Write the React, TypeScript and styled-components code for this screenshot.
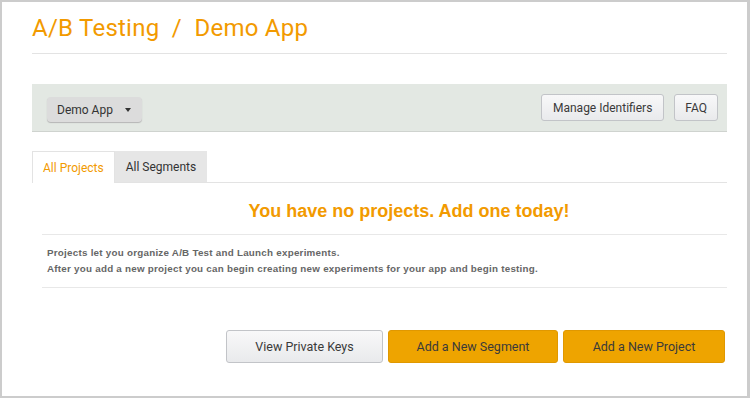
import styled, { createGlobalStyle } from 'styled-components'

const GlobalStyle = createGlobalStyle`
  html, body {
    margin: 0;
    padding: 0;
    background: #ffffff;
  }
  * {
    box-sizing: border-box;
  }
`

const Frame = styled.div`
  width: 750px;
  height: 398px;
  border: 2px solid #cccccc;
  border-right-width: 3px;
  background: #ffffff;
  padding: 10px 20px 0 30px;
  font-family: Roboto, 'Liberation Sans', sans-serif;
  overflow: hidden;
`

const Header = styled.header`
  border-bottom: 1px solid #e3e3e3;
  padding: 1px 0 10px;
`

const Title = styled.h1`
  margin: 0;
  font-size: 24px;
  line-height: 30px;
  font-weight: 400;
  color: #f29a00;
  letter-spacing: 0.25px;
`

const Toolbar = styled.section`
  margin-top: 30px;
  height: 48px;
  background: #e3e8e3;
  border-bottom: 1px solid #cfd3cf;
  display: flex;
  align-items: center;
  padding: 0 9px 0 15px;
  gap: 10px;
`

const DropButton = styled.button`
  height: 25px;
  width: 95px;
  margin-top: 4px;
  border: none;
  border-radius: 4px;
  background: #dcdcdc;
  box-shadow: 0 1px 1px #b5b5b5;
  font-family: Roboto, sans-serif;
  font-size: 12px;
  color: #333;
  display: flex;
  align-items: center;
  justify-content: flex-start;
  gap: 12px;
  padding: 0 0 0 10px;
`

const Caret = styled.span`
  width: 0;
  height: 0;
  border-left: 3.5px solid transparent;
  border-right: 3.5px solid transparent;
  border-top: 4px solid #333;
`

const Spacer = styled.div`
  flex: 1;
`

const ToolButton = styled.button<{ $pad: number }>`
  height: 27px;
  padding: 0 ${(p) => p.$pad}px;
  border: 1px solid #c2c4c8;
  border-radius: 3px;
  background: linear-gradient(#f8f8f9, #e9eaec);
  font-family: Roboto, sans-serif;
  font-size: 12px;
  color: #3a3a3a;
`

const Tabs = styled.nav`
  margin-top: 19px;
  display: flex;
  border-bottom: 1px solid #e3e3e3;
`

const Tab = styled.div<{ $active?: boolean }>`
  display: flex;
  align-items: center;
  padding: 0 10px;
  font-size: 12px;
  color: ${(p) => (p.$active ? '#f29a00' : '#333')};
  background: ${(p) => (p.$active ? '#ffffff' : '#e6e6e6')};
  border: 1px solid ${(p) => (p.$active ? '#e3e3e3' : '#e6e6e6')};
  border-bottom: none;
  margin-bottom: ${(p) => (p.$active ? '-1px' : '0')};
  height: ${(p) => (p.$active ? '32px' : '31px')};
`

const Body = styled.div`
  padding: 0 0 0 10px;
`

const EmptyTitle = styled.h2`
  margin: 0;
  padding: 19px 0 14px 49px;
  text-align: center;
  font-family: 'Liberation Sans', Arial, sans-serif;
  font-weight: 700;
  font-size: 18px;
  line-height: 18px;
  color: #f29a00;
  border-bottom: 1px solid #e8e8e8;
`

const Info = styled.div`
  padding: 10px 5px 10px;
  border-bottom: 1px solid #e8e8e8;
  font-family: 'Liberation Sans', Arial, sans-serif;
  font-weight: 700;
  font-size: 9.8px;
  letter-spacing: 0.25px;
  line-height: 16px;
  color: #666;
`

const InfoLine = styled.p`
  margin: 0;
`

const Actions = styled.div`
  margin-top: 42px;
  display: flex;
  justify-content: flex-end;
  gap: 5px;
  padding-right: 2px;
`

const ActionButton = styled.button<{ $primary?: boolean; $w: number }>`
  width: ${(p) => p.$w}px;
  height: 33px;
  border-radius: 3px;
  font-family: Roboto, sans-serif;
  font-size: 12.5px;
  color: #3a3a3a;
  border: 1px solid ${(p) => (p.$primary ? '#e09800' : '#c2c4c8')};
  background: ${(p) => (p.$primary ? '#eea400' : 'linear-gradient(#f8f8f9, #e9eaec)')};
`

export default function App() {
  return (
    <Frame>
      <GlobalStyle />
      <Header>
        <Title>A/B Testing&nbsp; / &nbsp;Demo App</Title>
      </Header>

      <Toolbar>
        <DropButton type="button">
          Demo App <Caret />
        </DropButton>
        <Spacer />
        <ToolButton type="button" $pad={11}>Manage Identifiers</ToolButton>
        <ToolButton type="button" $pad={10}>FAQ</ToolButton>
      </Toolbar>

      <Tabs>
        <Tab $active>All Projects</Tab>
        <Tab>All Segments</Tab>
      </Tabs>

      <Body>
        <EmptyTitle>You have no projects. Add one today!</EmptyTitle>
        <Info>
          <InfoLine>Projects let you organize A/B Test and Launch experiments.</InfoLine>
          <InfoLine>After you add a new project you can begin creating new experiments for your app and begin testing.</InfoLine>
        </Info>
      </Body>

      <Actions>
        <ActionButton type="button" $w={157}>View Private Keys</ActionButton>
        <ActionButton type="button" $primary $w={170}>Add a New Segment</ActionButton>
        <ActionButton type="button" $primary $w={162}>Add a New Project</ActionButton>
      </Actions>
    </Frame>
  )
}
